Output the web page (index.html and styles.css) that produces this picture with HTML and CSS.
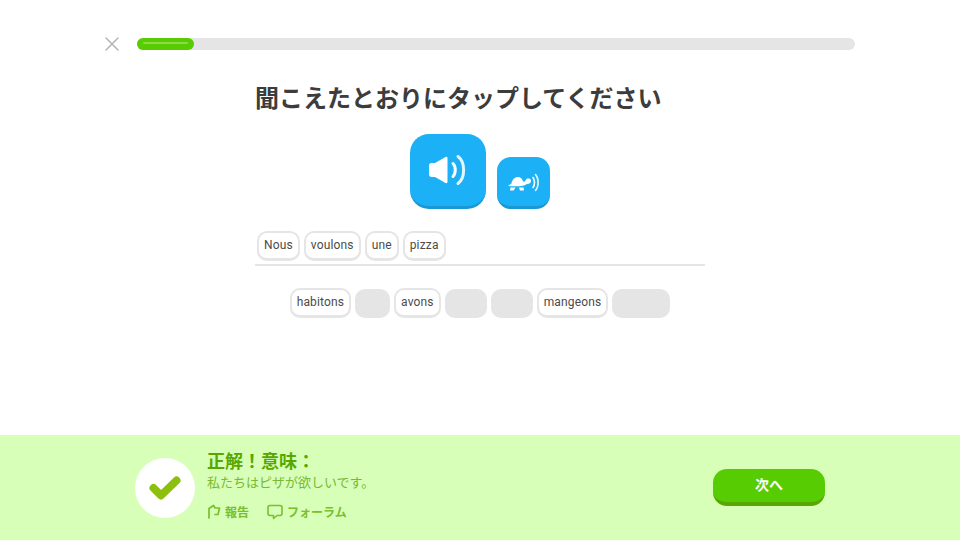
FILE: index.html
```html
<!DOCTYPE html>
<html lang="ja">
  <head>
    <meta charset="UTF-8" />
    <title>Lesson</title>
    <link rel="stylesheet" href="styles.css">
  </head>
  <body>
    <div class="page">
      <div class="top-bar">
        <svg class="close-icon" width="14" height="14" viewBox="0 0 14 14">
          <path d="M1 1L13 13M13 1L1 13" stroke="#b5b5b5" stroke-width="1.500" stroke-linecap="round" fill="none" />
        </svg>
        <div class="progress">
          <div class="progress-fill"><div class="progress-shine"></div></div>
        </div>
      </div>

      <div class="lesson">
        <h1 class="prompt">聞こえたとおりにタップしてください</h1>

        <div class="audio-row">
          <div class="audio-btn audio-big">
            <svg width="38" height="32" viewBox="0 0 38 32">
              <path d="M2.500 9H6L16.500 3C17.500 2.500 18.500 3 18.500 4V28C18.500 29 17.500 29.500 16.500 29L6 23H2.500C1 23 0 22 0 20.500V11.500C0 10 1 9 2.500 9Z" fill="#fff" />
              <path d="M24 9.500C27 12.500 27 19.500 24 22.500" stroke="#fff" stroke-width="3" stroke-linecap="round" fill="none" />
              <path d="M29 2.500C36.500 8 36.500 24 29 29.500" stroke="#e3f6ff" stroke-width="3" stroke-linecap="round" fill="none" />
            </svg>
          </div>
          <div class="audio-btn audio-small">
            <svg width="32" height="20" viewBox="0 0 32 20">
              <path d="M3.500 10.500C4 6.500 7 4 10 4C12.500 4 14.500 6 15 8.500H17L18 6.500C19 5 22.500 5 23 7.500C23.300 9.500 21.500 11 19 11L16 12.500C11 13.500 5 13.500 0 13C1 12 2 11.500 3.500 10.500Z" fill="#fff" />
              <path d="M2.500 14.500H7.500L5.500 17.500H2ZM11 14.500H15.500L16 17.500H12Z" fill="#fff" />
              <path d="M25 4.500C27 7 27 12 25 14.500" stroke="#fff" stroke-width="1.600" stroke-linecap="round" fill="none" />
              <path d="M27.500 1.500C31 5.500 31 13.500 27.500 17.500" stroke="#e3f6ff" stroke-width="1.600" stroke-linecap="round" fill="none" />
            </svg>
          </div>
        </div>

        <div class="answer-line">
          <span class="chip">Nous</span>
          <span class="chip">voulons</span>
          <span class="chip">une</span>
          <span class="chip">pizza</span>
        </div>

        <div class="word-bank">
          <span class="chip">habitons</span>
          <span class="slot slot-35"></span>
          <span class="chip">avons</span>
          <span class="slot slot-43"></span>
          <span class="slot slot-43"></span>
          <span class="chip">mangeons</span>
          <span class="slot slot-58"></span>
        </div>
      </div>

      <div class="footer">
        <div class="result">
          <div class="check-circle">
            <svg width="32" height="24" viewBox="0 0 32 24">
              <path d="M4.500 12L12 19.500L27.500 4.500" stroke="#8cc00c" stroke-width="8" stroke-linecap="round" stroke-linejoin="round" fill="none" />
            </svg>
          </div>
          <div class="result-text">
            <div class="result-title">正解！意味：</div>
            <div class="result-sub">私たちはピザが欲しいです。</div>
            <div class="result-links">
              <span class="link">
                <svg width="14" height="16" viewBox="0 0 14 16">
                  <path d="M2 14V4.500L6.500 1.500L8 4H12.500L11 10.500H8" stroke="#79c02c" stroke-width="1.700" stroke-linecap="round" stroke-linejoin="round" fill="none" />
                </svg>
                報告
              </span>
              <span class="link">
                <svg width="16" height="16" viewBox="0 0 16 16">
                  <path d="M3 1.500H13C14 1.500 15 2.500 15 3.500V9.500C15 10.500 14 11.500 13 11.500H10L6.500 14.500V11.500H3C2 11.500 1 10.500 1 9.500V3.500C1 2.500 2 1.500 3 1.500Z" stroke="#79c02c" stroke-width="1.600" stroke-linejoin="round" fill="none" />
                </svg>
                フォーラム
              </span>
            </div>
          </div>
        </div>
        <button class="next-btn">次へ</button>
      </div>
    </div>
  </body>
</html>
```

FILE: styles.css
```css
* {
  box-sizing: border-box;
}
body {
  margin: 0;
  background-color: #fff;
  font-family: "Noto Sans CJK JP", "Noto Sans", sans-serif;
}
.page {
  width: 960px;
  height: 540px;
  display: flex;
  flex-direction: column;
  overflow: hidden;
}
.top-bar {
  display: flex;
  align-items: center;
  gap: 18px;
  padding: 37px 105px 0;
}
.close-icon {
  flex: none;
}
.progress {
  flex: 1;
  height: 12px;
  background-color: #e5e5e5;
  border-radius: 6px;
}
.progress-fill {
  width: 57px;
  height: 12px;
  background-color: #58cc02;
  border-radius: 6px;
  padding: 4px 6px 0;
}
.progress-shine {
  height: 2px;
  background-color: #8fd84a;
  border-radius: 2px;
}
.lesson {
  flex: 1;
  width: 450px;
  margin: 0 auto;
}
.prompt {
  margin: 28px 0 0;
  font-size: 24px;
  line-height: 36px;
  font-weight: 700;
  color: #3c3c3c;
  white-space: nowrap;
}
.audio-row {
  display: flex;
  justify-content: center;
  align-items: flex-end;
  gap: 11px;
  margin-top: 19px;
}
.audio-btn {
  display: flex;
  align-items: center;
  justify-content: center;
  background-color: #1cb0f6;
  border-bottom: 3px solid #1899d6;
}
.audio-big {
  width: 76px;
  height: 75px;
  border-radius: 19px;
}
.audio-small {
  width: 53px;
  height: 52px;
  border-radius: 14px;
  padding-top: 2px;
}
.answer-line {
  display: flex;
  gap: 4px;
  height: 35px;
  margin-top: 22px;
  padding-left: 2px;
  border-bottom: 2px solid #e5e5e5;
}
.word-bank {
  display: flex;
  justify-content: center;
  gap: 4px;
  margin-top: 22px;
}
.chip {
  height: 30px;
  padding: 0 5px 2px;
  display: flex;
  align-items: center;
  font-family: "Roboto", sans-serif;
  font-size: 12px;
  letter-spacing: 0.15px;
  color: #4b4b4b;
  background-color: #fff;
  border: 2px solid #e5e5e5;
  border-bottom-width: 3px;
  border-radius: 10px;
}
.slot {
  height: 29px;
  margin-top: 1px;
  background-color: #e5e5e5;
  border-radius: 10px;
}
.slot-35 {
  width: 35px;
}
.slot-43 {
  width: 42px;
}
.slot-58 {
  width: 58px;
}
.footer {
  height: 105px;
  background-color: #d7ffb8;
  display: flex;
  justify-content: space-between;
  padding: 0 135px;
}
.result {
  display: flex;
  align-items: center;
  gap: 12px;
}
.check-circle {
  width: 60px;
  height: 60px;
  border-radius: 50%;
  background-color: #fff;
  display: flex;
  align-items: center;
  justify-content: center;
}
.result-text {
  align-self: flex-start;
  padding-top: 12px;
}
.result-title {
  font-size: 18px;
  line-height: 26px;
  font-weight: 700;
  color: #58a700;
}
.result-sub {
  font-size: 13px;
  line-height: 17px;
  color: #79b933;
}
.result-links {
  display: flex;
  gap: 18px;
  margin-top: 13px;
}
.link {
  display: flex;
  align-items: center;
  gap: 4px;
  font-size: 12px;
  line-height: 18px;
  font-weight: 700;
  color: #79c02c;
}
.next-btn {
  align-self: center;
  width: 112px;
  height: 37px;
  padding: 0 0 4px;
  border: none;
  border-bottom: 4px solid #58a700;
  border-radius: 14px;
  background-color: #58cc02;
  color: #fff;
  font-family: "Noto Sans CJK JP", "Noto Sans", sans-serif;
  font-size: 14px;
  font-weight: 700;
}
```
